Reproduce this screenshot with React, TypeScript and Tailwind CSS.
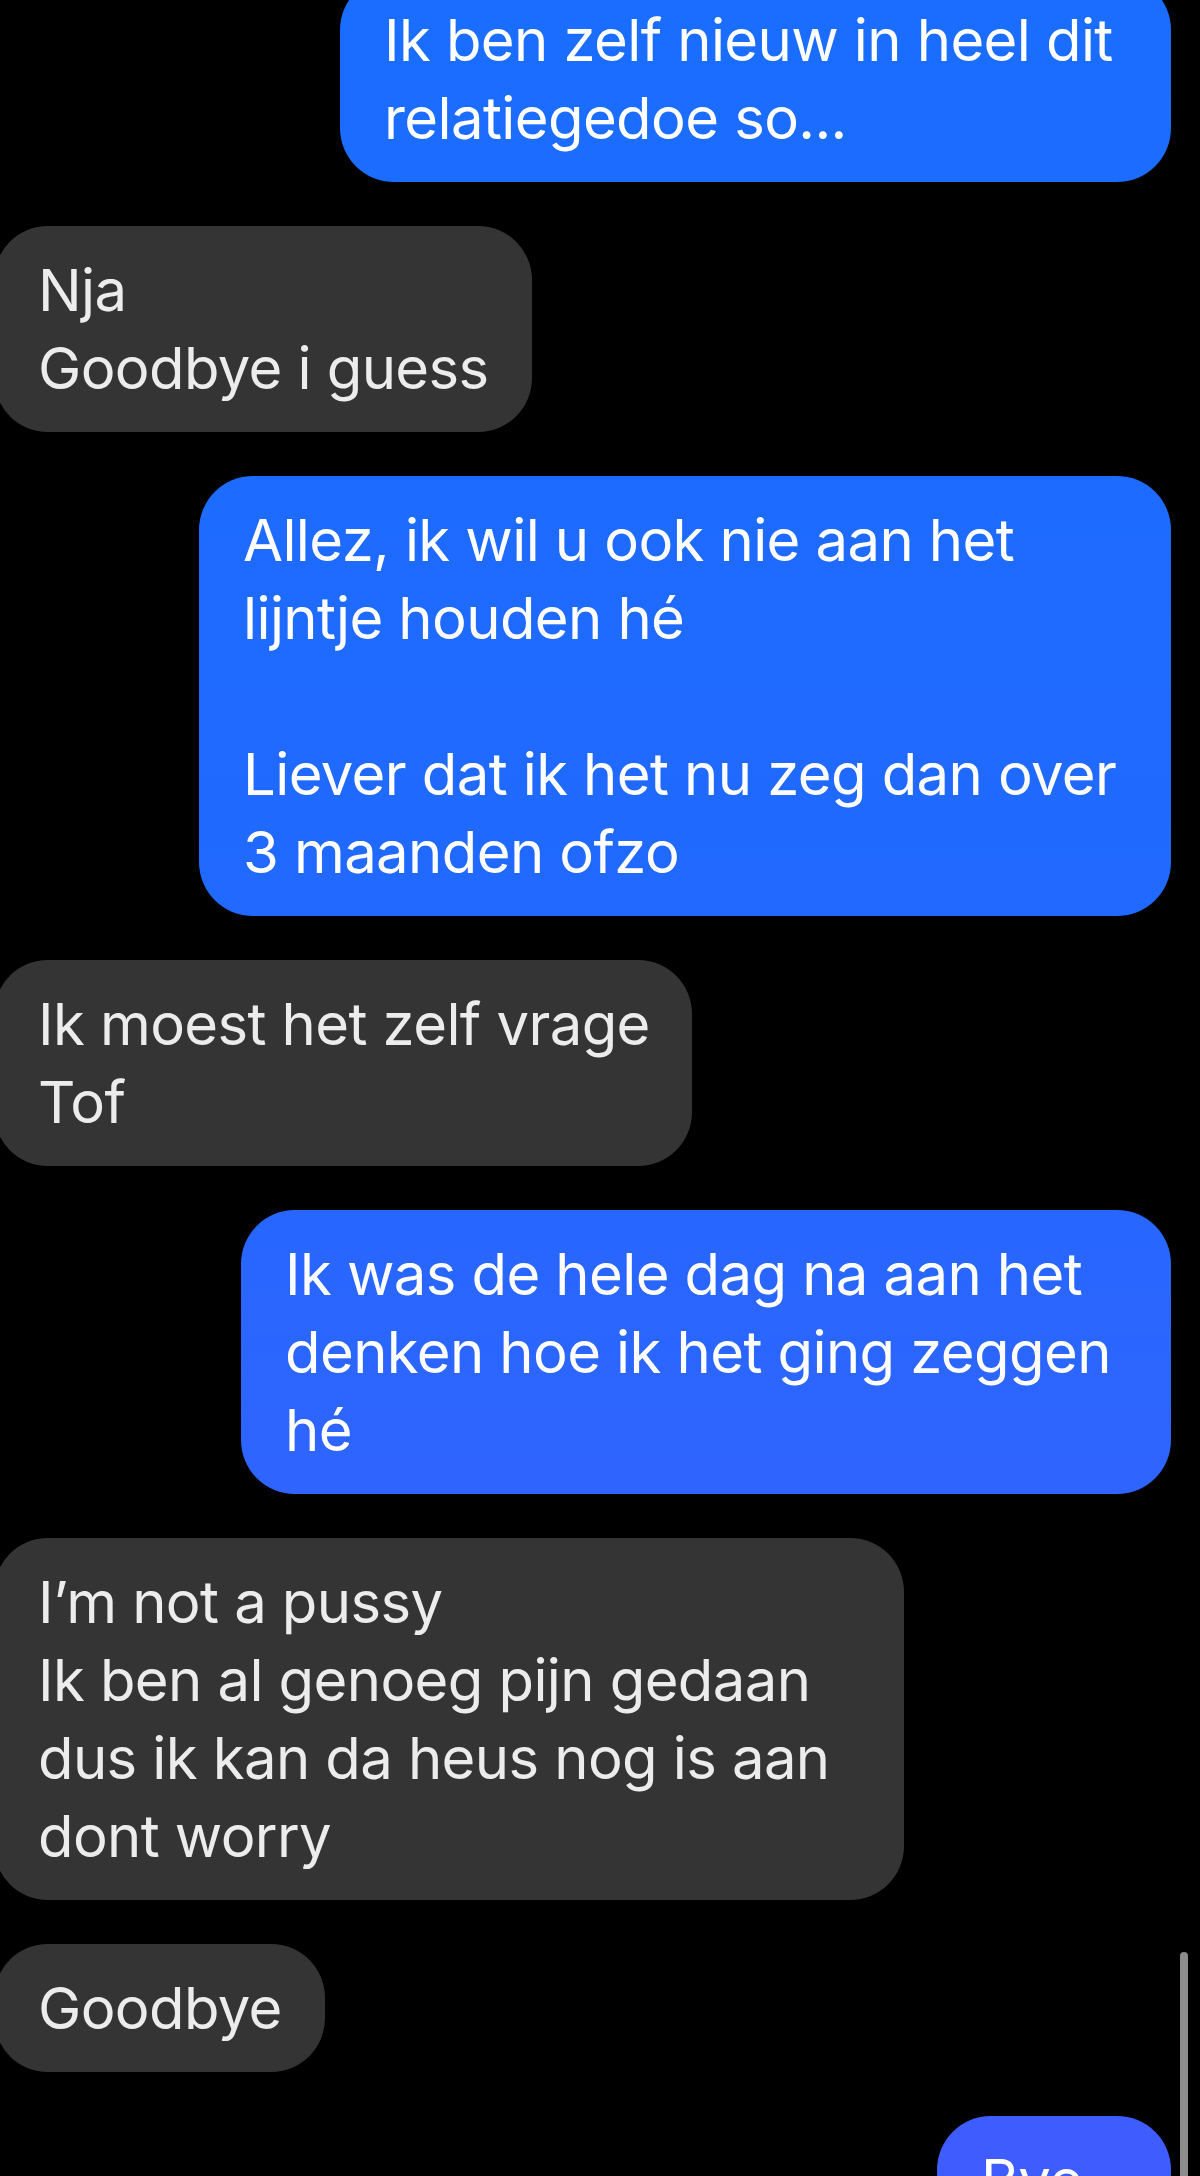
import React from "react"

// ── Types ─────────────────────────────────────────────────────────────────

type Message = {
  from: "me" | "them"
  width: string // bubble width class, matches the screenshot
  text: string
}

// ── Data ──────────────────────────────────────────────────────────────────

const MESSAGES: Message[] = [
  { from: "me", width: "w-[831px]", text: "Ik ben zelf nieuw in heel dit\nrelatiegedoe so..." },
  { from: "them", width: "w-[538px]", text: "Nja\nGoodbye i guess" },
  {
    from: "me",
    width: "w-[972px]",
    text: "Allez, ik wil u ook nie aan het\nlijntje houden hé\n\nLiever dat ik het nu zeg dan over\n3 maanden ofzo",
  },
  { from: "them", width: "w-[698px]", text: "Ik moest het zelf vrage\nTof" },
  { from: "me", width: "w-[930px]", text: "Ik was de hele dag na aan het\ndenken hoe ik het ging zeggen\nhé" },
  {
    from: "them",
    width: "w-[910px]",
    text: "I’m not a pussy\nIk ben al genoeg pijn gedaan\ndus ik kan da heus nog is aan\ndont worry",
  },
  { from: "them", width: "w-[331px]", text: "Goodbye" },
  { from: "me", width: "w-[234px]", text: "Bye" },
]

// ── Bubble ────────────────────────────────────────────────────────────────

function Bubble({ msg }: { msg: Message }) {
  const mine = msg.from === "me"
  return (
    <div
      className={[
        msg.width,
        "rounded-[54px] px-[44px] py-[25px] whitespace-pre text-[58px] leading-[78px] tracking-[-0.6px]",
        mine
          ? "self-end mr-[29px] bg-linear-to-b from-[#1a6dff] via-[#2268ff] to-[#3f5cff] bg-fixed text-white"
          : "self-start -ml-[6px] bg-[#343434] text-[#ececec]",
      ].join(" ")}
    >
      {msg.text}
    </div>
  )
}

// ── Page ──────────────────────────────────────────────────────────────────

export default function App() {
  return (
    <div
      className="relative h-[2176px] w-[1200px] overflow-hidden bg-black"
      style={{ fontFamily: "Inter, 'Noto Sans', 'Liberation Sans', sans-serif" }}
    >
      <div className="-mt-[24px] flex flex-col gap-[44px]">
        {MESSAGES.map((m, i) => (
          <Bubble key={i} msg={m} />
        ))}
      </div>

      {/* scroll indicator */}
      <div className="absolute right-[12px] top-[1952px] h-[260px] w-[8px] rounded-full bg-[#8c8c8c]" />
    </div>
  )
}
